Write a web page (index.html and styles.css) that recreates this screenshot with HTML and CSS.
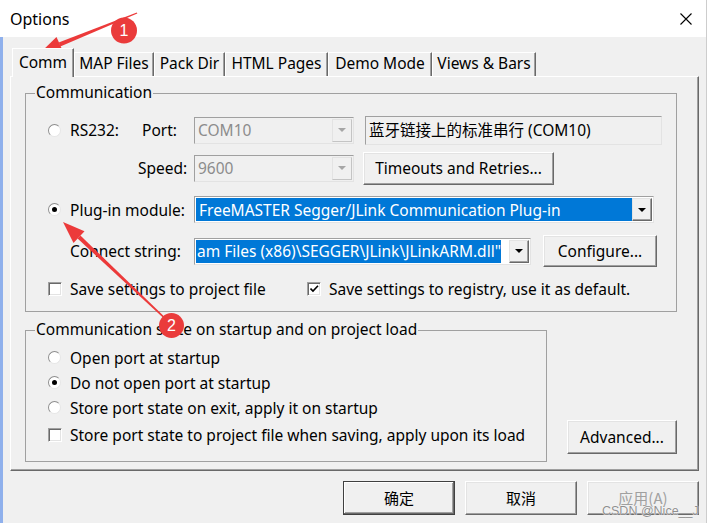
FILE: index.html
```html
<!DOCTYPE html>
<html>
<head>
<meta charset="utf-8">
<title>Options</title>
<link rel="stylesheet" href="styles.css">
</head>
<body>
<div class="window">
  <div class="titlebar">
    <span class="title">Options</span>
    <svg class="close" width="12" height="12" viewBox="0 0 12 12"><path d="M0.5 0.5 L11.5 11.5 M11.5 0.5 L0.5 11.5" stroke="#000" stroke-width="1.1" fill="none"/></svg>
  </div>
  <div class="client">
    <div class="tabs">
      <div class="tab active t-comm">Comm</div>
      <div class="tab t-map">MAP Files</div>
      <div class="tab t-pack">Pack Dir</div>
      <div class="tab t-html">HTML Pages</div>
      <div class="tab t-demo">Demo Mode</div>
      <div class="tab t-views">Views &amp; Bars</div>
    </div>
    <div class="panel">
      <fieldset class="group g1">
        <legend>Communication</legend>
        <div class="row r1">
          <span class="radio"></span>
          <span class="lbl l-rs">RS232:</span>
          <span class="lbl l-port">Port:</span>
          <div class="combo disabled c-port"><span class="val">COM10</span><span class="drop"><i class="tri"></i></span></div>
          <div class="textbox">蓝牙链接上的标准串行 (COM10)</div>
        </div>
        <div class="row r2">
          <span class="lbl l-speed">Speed:</span>
          <div class="combo disabled c-port"><span class="val">9600</span><span class="drop"><i class="tri"></i></span></div>
          <button class="btn b-timeouts">Timeouts and Retries...</button>
        </div>
        <div class="row r3">
          <span class="radio checked"></span>
          <span class="lbl l-plug">Plug-in module:</span>
          <div class="combo c-plug"><span class="val sel full">FreeMASTER Segger/JLink Communication Plug-in</span><span class="drop"><i class="tri"></i></span></div>
        </div>
        <div class="row r4">
          <span class="lbl l-conn">Connect string:</span>
          <div class="combo c-conn"><span class="val"><span class="sel">am Files (x86)\SEGGER\JLink\JLinkARM.dll"</span></span><span class="drop"><i class="tri"></i></span></div>
          <button class="btn b-conf">Configure...</button>
        </div>
        <div class="row r5">
          <span class="check"></span>
          <span class="lbl l-save1">Save settings to project file</span>
          <span class="check checked"><svg width="9" height="8" viewBox="0 0 9 8"><path d="M0.5 3.5 L3 6 L8 0.8" stroke="#000" stroke-width="1.6" fill="none"/></svg></span>
          <span class="lbl">Save settings to registry, use it as default.</span>
        </div>
      </fieldset>
      <div class="lower">
        <fieldset class="group g2">
          <legend>Communication state on startup and on project load</legend>
          <div class="row s1"><span class="radio"></span><span class="lbl">Open port at startup</span></div>
          <div class="row s2"><span class="radio checked"></span><span class="lbl">Do not open port at startup</span></div>
          <div class="row s3"><span class="radio"></span><span class="lbl">Store port state on exit, apply it on startup</span></div>
          <div class="row s4"><span class="check"></span><span class="lbl">Store port state to project file when saving, apply upon its load</span></div>
        </fieldset>
        <button class="btn b-adv">Advanced...</button>
      </div>
    </div>
    <div class="buttons">
      <button class="btn dlg default">确定</button>
      <button class="btn dlg">取消</button>
      <button class="btn dlg disabled-btn">应用(A)</button>
    </div>
  </div>
  <div class="watermark">CSDN @Nice__J</div>
  <svg class="annot" width="708" height="527" viewBox="0 0 708 527">
    <polygon points="60.3,46.4 137.3,13.6 136.8,12.4 58.7,42.6" fill="#ec3a3a"/>
    <polygon points="41,52 63,51.6 56.5,37" fill="#ec3a3a"/>
    <circle cx="124" cy="30.5" r="13" fill="#ea3b3b"/>
    <text x="124" y="36" class="num">1</text>
    <polygon points="80.4,235.6 172.5,324.5 171.5,325.5 77.6,238.6" fill="#ec3a3a"/>
    <polygon points="63,222 84.5,231.3 73.5,242.9" fill="#ec3a3a"/>
    <circle cx="171.5" cy="325.5" r="12.5" fill="#ea3b3b"/>
    <text x="171.5" y="331" class="num">2</text>
  </svg>
</div>
</body>
</html>
```
FILE: styles.css
```css
html, body {
  margin: 0;
  padding: 0;
  background: #ffffff;
}
body {
  font-family: "Noto Sans", "Noto Sans CJK SC", sans-serif;
  font-size: 15.5px;
  color: #000;
}
.window {
  position: relative;
  width: 707px;
  height: 523px;
  box-sizing: border-box;
  border-right: 1px solid #cdcdcd;
  background: #f0f0f0;
  overflow: hidden;
}
.titlebar {
  height: 37px;
  background: #ffffff;
  display: flex;
  align-items: center;
  justify-content: space-between;
  padding: 0 14px 0 10px;
}
.title {
  font-size: 16px;
  line-height: 20px;
  margin-top: 1px;
}
.close {
  display: block;
  margin-top: 1px;
}
.client {
  height: 486px;
  box-sizing: border-box;
  border-left: 3px solid #8fb0ec;
  display: flex;
  flex-direction: column;
}
.tabs {
  display: flex;
  align-items: flex-end;
  height: 29px;
  margin: 11px 0 0 9px;
}
.tab {
  height: 24px;
  margin-bottom: 1px;
  box-sizing: border-box;
  border-top: 1px solid #ffffff;
  border-left: 1px solid #ffffff;
  border-right: 1px solid #696969;
  box-shadow: inset -1px 0 #a0a0a0;
  display: flex;
  align-items: center;
  justify-content: center;
  line-height: 20px;
  padding-bottom: 3px;
  background: #f0f0f0;
}
.tab.active {
  height: 29px;
  margin-bottom: 0;
  position: relative;
  z-index: 2;
  padding-bottom: 3px;
}
.t-comm { width: 62px; }
.t-map { width: 80px; }
.t-pack { width: 71px; }
.t-html { width: 103px; }
.t-demo { width: 104px; }
.t-views { width: 104px; }

.panel {
  margin: -1px 7px 0 7px;
  height: 395px;
  box-sizing: border-box;
  border: 1px solid;
  border-color: #ffffff #696969 #696969 #ffffff;
  box-shadow: inset -1px -1px #a0a0a0;
  padding: 6px 21px 0 14px;
}
fieldset.group {
  margin: 0;
  padding: 0;
  border: 1px solid #a0a0a0;
  min-width: 0;
  box-sizing: border-box;
}
fieldset.group legend {
  padding: 0 1px 1px 1px;
  margin-left: 9px;
  line-height: 19px;
  font-size: 15.5px;
}
.g1 {
  height: 229px;
}
.row {
  display: flex;
  align-items: center;
  padding-left: 22px;
  line-height: 20px;
  white-space: nowrap;
}
.lbl {
  display: block;
  flex: none;
}
.r1 { margin-top: 11px; height: 32px; }
.r2 { margin-top: 5px; height: 34px; }
.r3 { margin-top: 10px; height: 29px; }
.r4 { margin-top: 10px; height: 34px; }
.r5 { margin-top: 11px; height: 20px; }

.radio {
  flex: none;
  width: 13px;
  height: 13px;
  box-sizing: border-box;
  border-radius: 50%;
  background: #ffffff;
  border: 1px solid;
  border-color: #8d8d8d #e6e6e6 #e6e6e6 #8d8d8d;
  margin-right: 9px;
  display: flex;
  align-items: center;
  justify-content: center;
}
.radio.checked::after {
  content: "";
  width: 5px;
  height: 5px;
  border-radius: 50%;
  background: #000;
}
.check {
  flex: none;
  width: 14px;
  height: 14px;
  box-sizing: border-box;
  background: #ffffff;
  border: 1px solid;
  border-color: #a0a0a0 #ffffff #ffffff #a0a0a0;
  box-shadow: inset 1px 1px #696969, inset -1px -1px #e3e3e3;
  margin-right: 8px;
  display: flex;
  align-items: center;
  justify-content: center;
}
.check svg { display: block; }

.l-rs { width: 72px; }
.l-port { width: 52px; }
.l-speed { width: 56px; margin-left: 90px; }
.l-plug { width: 124px; }
.l-conn { width: 124px; margin-left: 22px; }
.l-save1 { width: 237px; }

.combo {
  flex: none;
  display: flex;
  height: 27px;
  box-sizing: border-box;
  border: 1px solid;
  border-color: #a0a0a0 #e3e3e3 #e3e3e3 #a0a0a0;
  background: #ffffff;
  padding: 1px;
}
.combo .val {
  flex: 1;
  min-width: 0;
  overflow: hidden;
  display: flex;
  align-items: center;
  padding-left: 2px;
  line-height: 22px;
}
.combo.disabled {
  background: #f0f0f0;
  color: #8c8c8c;
}
.combo .drop {
  flex: none;
  width: 20px;
  box-sizing: border-box;
  border: 1px solid;
  border-color: #e3e3e3 #696969 #696969 #e3e3e3;
  box-shadow: inset -1px -1px #a0a0a0;
  background: #f0f0f0;
  display: flex;
  align-items: center;
  justify-content: center;
}
.combo.disabled .drop {
  border-color: #e3e3e3 #c4c4c4 #c4c4c4 #e3e3e3;
  box-shadow: none;
}
.tri {
  display: block;
  width: 0;
  height: 0;
  border-left: 4px solid transparent;
  border-right: 4px solid transparent;
  border-top: 4px solid #000;
}
.combo.disabled .tri {
  border-top-color: #a6a6a6;
}
.c-port { width: 160px; }
.c-plug { width: 460px; }
.c-conn { width: 337px; }
.sel {
  background: #0078d7;
  color: #ffffff;
}
.val.sel.full {
  padding-left: 3px;
}
.c-conn .val { padding-left: 0; }
.c-conn .sel { padding: 1px 0 1px 1px; line-height: 21px; }

.textbox {
  flex: none;
  width: 297px;
  height: 29px;
  box-sizing: border-box;
  margin-left: 11px;
  border: 1px solid;
  border-color: #a0a0a0 #e3e3e3 #e3e3e3 #a0a0a0;
  background: #f0f0f0;
  padding-left: 3px;
  display: flex;
  align-items: center;
  line-height: 20px;
}

.btn {
  flex: none;
  font-family: inherit;
  font-size: 15.5px;
  color: #000;
  background: #f0f0f0;
  box-sizing: border-box;
  border: 1px solid;
  border-color: #ffffff #696969 #696969 #ffffff;
  box-shadow: inset -1px -1px #a0a0a0, inset 1px 1px #e3e3e3;
  padding: 0;
  margin: 0;
  line-height: 20px;
  display: flex;
  align-items: center;
  justify-content: center;
}
.b-timeouts { width: 191px; height: 33px; margin-left: 9px; }
.b-conf { width: 114px; height: 32px; margin-left: 12px; }

.lower {
  display: flex;
  align-items: flex-end;
  margin-top: 8px;
}
.g2 {
  width: 523px;
  height: 142px;
}
.s1 { margin-top: 5px; height: 25px; }
.s2 { height: 25px; }
.s3 { height: 25px; }
.s4 { margin-top: 5px; height: 20px; }
.b-adv {
  width: 110px;
  height: 34px;
  margin-left: 20px;
  margin-bottom: 8px;
}

.buttons {
  display: flex;
  justify-content: flex-end;
  gap: 10px;
  margin-top: 10px;
  padding-right: 7px;
}
.btn.dlg {
  width: 112px;
  height: 34px;
  font-family: "Noto Sans CJK SC", sans-serif;
  font-size: 15px;
}
.btn.default {
  border-color: #404040;
  box-shadow: inset -1px -1px #696969, inset 1px 1px #ffffff, inset -2px -2px #a0a0a0;
}
.btn.disabled-btn {
  color: #a0a0a0;
}

.watermark {
  position: absolute;
  left: 602px;
  top: 504px;
  font-family: "Liberation Sans", sans-serif;
  font-size: 12.5px;
  line-height: 15px;
  color: #8f8f8f;
  text-shadow: 0 0 1px #ffffff, 0 0 1px #ffffff;
}
.annot {
  position: absolute;
  left: 0;
  top: 0;
  pointer-events: none;
}
.annot .num {
  font-family: "Liberation Sans", sans-serif;
  font-size: 16px;
  fill: #ffffff;
  text-anchor: middle;
}
```
